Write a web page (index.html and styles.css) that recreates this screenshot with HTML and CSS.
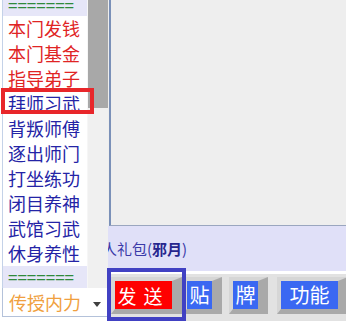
FILE: index.html
```html
<!DOCTYPE html>
<html lang="zh">
<head>
<meta charset="utf-8">
<link rel="stylesheet" href="styles.css">
</head>
<body>
<div class="screen">
  <div class="main">
    <div class="log"></div>
    <div class="chat"><span class="chat-line">新人礼包(<b>邪月</b>)</span></div>
    <div class="toolbar">
      <div class="btn btn-send">发送</div>
      <div class="btn btn-tie">贴</div>
      <div class="btn btn-pai">牌</div>
      <div class="btn btn-func">功能</div>
    </div>
  </div>

  <div class="dropdown">
    <div class="listbox">
      <div class="items">
        <div class="item sep sep-top">=======</div>
        <div class="item red">本门发钱</div>
        <div class="item red">本门基金</div>
        <div class="item red">指导弟子</div>
        <div class="item blue">拜师习武</div>
        <div class="item blue">背叛师傅</div>
        <div class="item blue">逐出师门</div>
        <div class="item blue">打坐练功</div>
        <div class="item blue">闭目养神</div>
        <div class="item blue">武馆习武</div>
        <div class="item blue">休身养性</div>
        <div class="item sep">=======</div>
      </div>
      <div class="scrollbar"><div class="thumb"></div></div>
    </div>
    <div class="combo">
      <span class="combo-text">传授内力</span>
      <span class="combo-arrow"></span>
    </div>
  </div>

  <div class="mark mark-red"></div>
  <div class="mark mark-blue"></div>
</div>
</body>
</html>
```

FILE: styles.css
```css
html, body {
  margin: 0;
  padding: 0;
  background: #eeeeee;
}

.screen {
  position: relative;
  width: 346px;
  height: 321px;
  overflow: hidden;
  background: #eeeeee;
  font-family: "Noto Sans CJK SC", "Noto Sans", sans-serif;
}

.main {
  display: flex;
  flex-direction: column;
  height: 100%;
}

.log {
  flex: none;
  height: 225px;
  margin-left: 109px;
  border-left: 2px solid #7a90b8;
  border-bottom: 1px solid #9aa6bf;
  background: #eeeeee;
}

.chat {
  flex: none;
  height: 45px;
  background: #e0e0f8;
  border-bottom: 3px solid #ffffff;
  display: flex;
  align-items: center;
  padding-left: 87px;
  font-size: 15px;
  color: #3a3aa8;
  line-height: 1;
}

.chat b {
  color: #26268e;
}

.toolbar {
  flex: 1;
  background: #e2e2e2;
  display: flex;
  align-items: flex-start;
  padding: 3px 0 0 111px;
}

.btn {
  flex: none;
  display: flex;
  align-items: center;
  justify-content: center;
  height: 28px;
  border-style: solid;
  border-width: 4px 10px 5px 4px;
  border-color: #d6d6d6 #a9a9a9 #a9a9a9 #d6d6d6;
  color: #ffffff;
  font-size: 20px;
  line-height: 1;
  white-space: nowrap;
  background: #3a68f2;
}

.btn-send {
  width: 57px;
  background: #ff0000;
  font-size: 19px;
  letter-spacing: 7px;
}

.btn-tie {
  width: 25px;
  margin-left: 1px;
}

.btn-pai {
  width: 25px;
  margin-left: 7px;
}

.btn-func {
  width: 57px;
  margin-left: 9px;
}

/* dropdown overlay */
.dropdown {
  position: absolute;
  left: 0;
  top: 0;
  width: 108px;
  height: 321px;
  display: flex;
  flex-direction: column;
  background: #ffffff;
}

.listbox {
  flex: none;
  height: 288px;
  display: flex;
  border-left: 1px solid #c4d2e8;
  margin-left: 2px;
  background: #ffffff;
  overflow: hidden;
}

.items {
  flex: none;
  width: 84px;
  display: flex;
  flex-direction: column;
  margin-top: -6px;
}

.item {
  flex: none;
  height: 25px;
  line-height: 25px;
  padding-left: 5px;
  font-size: 18px;
  white-space: nowrap;
}

.item.red {
  color: #e02424;
}

.item.blue {
  color: #2424a6;
}

.item.sep {
  height: 22px;
  line-height: 22px;
  background: #e6e6f8;
  color: #2f8a3a;
  font-size: 17px;
}

.item.sep-top {
  height: 22px;
}

.scrollbar {
  flex: 1;
  background: #f0f0f0;
  border-left: 1px solid #f6f6f6;
}

.thumb {
  height: 108px;
  background: #a8a8a8;
}

.combo {
  flex: none;
  height: 28px;
  margin-left: 2px;
  border: 1px solid #b4c2da;
  border-top: none;
  background: #ffffff;
  display: flex;
  align-items: center;
  padding-left: 6px;
}

.combo-text {
  font-size: 18px;
  color: #f0a040;
  line-height: 1;
}

.combo-arrow {
  margin-left: auto;
  margin-right: 6px;
  width: 0;
  height: 0;
  border-left: 4px solid transparent;
  border-right: 4px solid transparent;
  border-top: 5px solid #404040;
  margin-top: 4px;
}

/* annotation boxes */
.mark {
  position: absolute;
  box-sizing: border-box;
  border-style: solid;
  border-width: 4px;
}

.mark-red {
  left: 1px;
  top: 88px;
  width: 93px;
  height: 26px;
  border-color: #e8262a;
}

.mark-blue {
  left: 107px;
  top: 268px;
  width: 79px;
  height: 53px;
  border-color: #4141c3;
}
```
